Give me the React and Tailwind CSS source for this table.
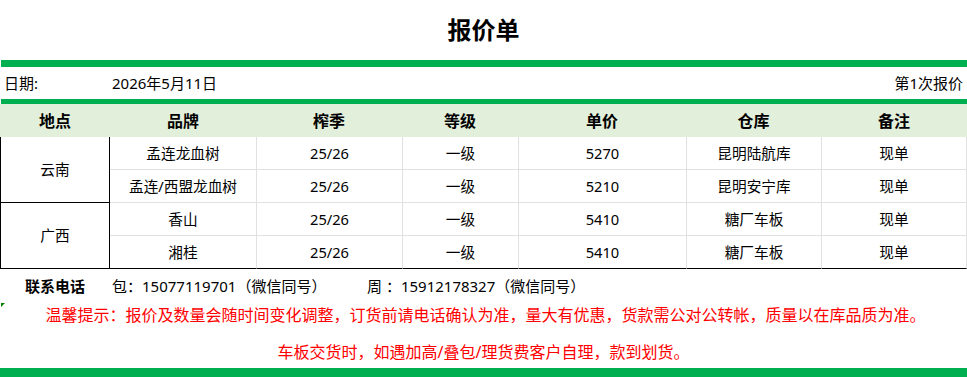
import React from "react";

const rows = [
  { brand: "孟连龙血树", season: "25/26", grade: "一级", price: "5270", store: "昆明陆航库", note: "现单" },
  { brand: "孟连/西盟龙血树", season: "25/26", grade: "一级", price: "5210", store: "昆明安宁库", note: "现单" },
  { brand: "香山", season: "25/26", grade: "一级", price: "5410", store: "糖厂车板", note: "现单" },
  { brand: "湘桂", season: "25/26", grade: "一级", price: "5410", store: "糖厂车板", note: "现单" },
];

const headers = ["地点", "品牌", "榨季", "等级", "单价", "仓库", "备注"];

const App = () => {
  return (
    <div className="w-[967px] h-[377px] bg-white text-black font-['Noto_Sans','Noto_Sans_CJK_SC',sans-serif] overflow-hidden">
      {/* title */}
      <div className="h-[60px] flex items-center justify-center text-[24px] font-bold leading-none">
        报价单
      </div>
      <div className="h-[7px] ml-px bg-[#00b050]" />

      {/* date row */}
      <div className="h-[32px] flex items-center text-[15px] leading-none">
        <span className="w-[112px] pl-1">日期:</span>
        <span>2026年5月11日</span>
        <span className="ml-auto pr-1">第1次报价</span>
      </div>
      <div className="h-[5px] ml-px bg-[#00b050]" />

      {/* table */}
      <div className="grid grid-cols-[110px_146px_146px_116px_168px_135px_146px] grid-rows-[33px_33px_33px_33px_33px] text-[14.67px] leading-none">
        {headers.map((h) => (
          <div key={h} className="bg-[#e2efda] flex items-center justify-center font-bold text-[16px]">
            {h}
          </div>
        ))}

        {rows.map((r, i) => {
          const last = i === rows.length - 1;
          const bottom = last ? "border-b-black" : "border-b-[#e1e1e1]";
          const cells = [r.brand, r.season, r.grade, r.price, r.store, r.note];
          return (
            <React.Fragment key={i}>
              {i % 2 === 0 && (
                <div className="row-span-2 flex items-center justify-center border-l border-r border-b border-black">
                  {i === 0 ? "云南" : "广西"}
                </div>
              )}
              {cells.map((c, j) => (
                <div
                  key={j}
                  className={`flex items-center justify-center border-b ${bottom} ${
                    j === 0 ? "" : "border-l border-l-[#e1e1e1]"
                  } ${j === cells.length - 1 ? "border-r border-r-[#e1e1e1]" : ""}`}
                >
                  {c}
                </div>
              ))}
            </React.Fragment>
          );
        })}
      </div>

      {/* contact */}
      <div className="h-[34px] flex items-center text-[15px] leading-none">
        <span className="w-[112px] pl-[25px] font-bold">联系电话</span>
        <span className="w-[255px]">包：15077119701（微信同号）</span>
        <span>周 ：15912178327（微信同号）</span>
      </div>

      {/* notes */}
      <div className="relative text-[#ff0000] text-[16px] leading-none">
        <svg className="absolute left-px top-0" width="4" height="4" viewBox="0 0 4 4">
          <polygon points="0,0 4,0 0,4" fill="#008000" />
        </svg>
        <div className="h-[20px] flex items-end justify-center pl-[4px]">
          温馨提示：报价及数量会随时间变化调整，订货前请电话确认为准，量大有优惠，货款需公对公转帐，质量以在库品质为准。
        </div>
        <div className="h-[37px] flex items-end justify-center">
          车板交货时，如遇加高/叠包/理货费客户自理，款到划货。
        </div>
      </div>
      <div className="mt-[8px] h-[9px] bg-[#00b050]" />
    </div>
  );
};

export default App;
